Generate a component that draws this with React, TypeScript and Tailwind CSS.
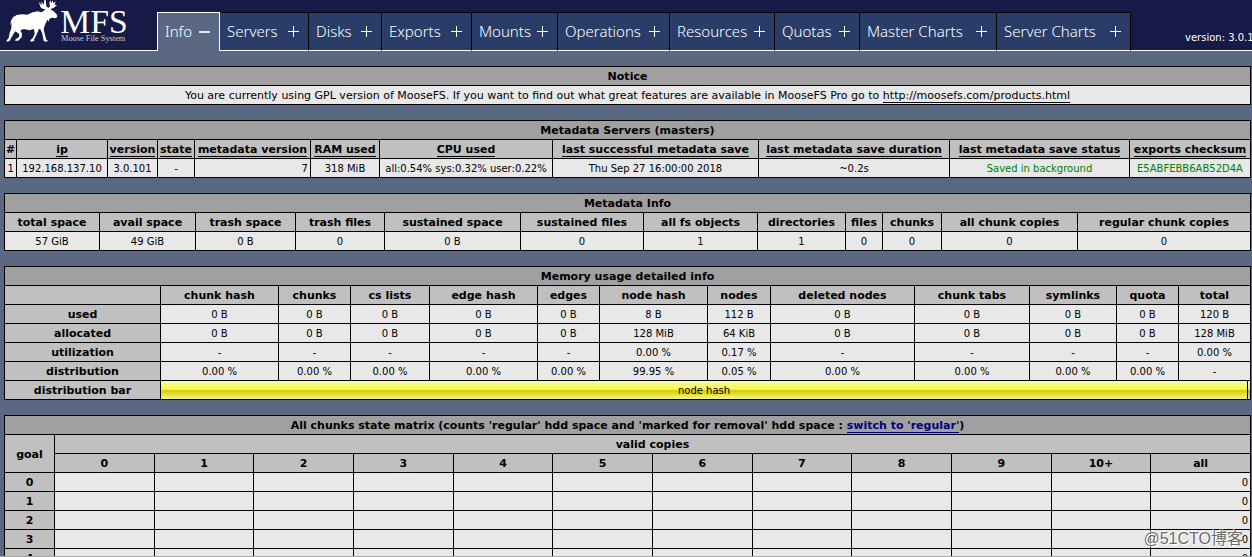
import React from "react";

type Align = "center" | "right";

const tabs = [
  { label: "Info", width: "w-[63px]", active: true },
  { label: "Servers", width: "w-[89px]" },
  { label: "Disks", width: "w-[73px]" },
  { label: "Exports", width: "w-[90px]" },
  { label: "Mounts", width: "w-[86px]" },
  { label: "Operations", width: "w-[112px]" },
  { label: "Resources", width: "w-[105px]" },
  { label: "Quotas", width: "w-[85px]" },
  { label: "Master Charts", width: "w-[137px]" },
  { label: "Server Charts", width: "w-[134px]" },
];

const frame = "h-[19px] overflow-hidden whitespace-nowrap border-r border-b border-black text-center leading-4";
const cell = `${frame} px-0 pt-0.5 pb-0`;

function Cols({ widths }: { widths: number[] }) {
  const total = widths.reduce((a, b) => a + b, 0);
  return (
    <colgroup>
      {widths.map((w, i) => (
        <col key={i} style={{ width: `${(w / total) * 100}%` }} />
      ))}
    </colgroup>
  );
}

function Panel({ children }: { children: React.ReactNode }) {
  return (
    <table className="w-full table-fixed border-separate border-spacing-0 border-t border-l border-black">{children}</table>
  );
}

function Title({ span, children }: { span: number; children: React.ReactNode }) {
  return (
    <tr>
      <th colSpan={span} className={`${cell} bg-[#a0a0a0] text-[11px]`}>
        {children}
      </th>
    </tr>
  );
}

function Head(props: React.ThHTMLAttributes<HTMLTableCellElement>) {
  return <th {...props} className={`${cell} bg-[#c0c0c0] text-[11px]`} />;
}

function Cell({ align = "center", tone = "", children }: { align?: Align; tone?: string; children?: React.ReactNode }) {
  return (
    <td className={`${cell} bg-[#e8e8e8] ${tone}`}>
      {align === "right" ? <div className="pr-0.5 text-right">{children}</div> : children}
    </td>
  );
}

function Logo() {
  return (
    <svg viewBox="0 0 471 150" className="h-[50px] w-[157px] shrink-0" role="img" aria-label="MFS Moose File System">
      <path
        fill="#fff"
        d="M117 6 L126 16 L124 3 L131 15 L133 0 L137 0 L139 19 L145 24 L150 18 L148 8 L151 1 L154 10 L158 1 L160 10 L167 4 L164 14 L171 16 L161 23 L151 28 L160 33 L170 43 L172 51 L166 55 L155 53 L148 57 L146 65 L142 59 L136 72 L131 87 L134 101 L139 119 L145 123 L136 125 L131 122 L127 101 L122 89 L117 86 L111 101 L102 119 L103 123 L92 125 L91 121 L99 113 L104 101 L102 87 L88 91 L72 87 L61 91 L66 101 L65 112 L55 122 L45 122 L47 118 L57 111 L58 103 L46 94 L39 104 L33 115 L29 123 L20 125 L20 121 L26 114 L29 99 L34 85 L35 68 L31 76 L33 62 L39 52 L50 45 L65 43 L82 44 L98 37 L113 34 L124 37 L131 33 L136 27 L129 27 L121 21 Z"
      />
      <text x="181" y="100" fill="#fff" fontFamily="Liberation Serif, serif" fontSize="101">MFS</text>
      <text x="183" y="124" fill="#c9cbdc" fontFamily="Liberation Serif, serif" fontSize="25">Moose File System</text>
    </svg>
  );
}

function Sign({ minus }: { minus?: boolean }) {
  return (
    <svg viewBox="0 0 11 11" className="size-[11px] shrink-0" shapeRendering="crispEdges" aria-hidden="true">
      {minus ? <path d="M0 4h11v2H0z" fill="#e4e6ec" /> : <path d="M0 5h11v1H0zM5 0h1v11H5z" fill="#fff" />}
    </svg>
  );
}

function Sort({ children }: { children: React.ReactNode }) {
  return (
    <a href="#" className="border-b border-black">
      {children}
    </a>
  );
}

const serverCols = ["#", "ip", "version", "state", "metadata version", "RAM used", "CPU used", "last successful metadata save", "last metadata save duration", "last metadata save status", "exports checksum"];

const info: [string, string][] = [
  ["total space", "57 GiB"],
  ["avail space", "49 GiB"],
  ["trash space", "0 B"],
  ["trash files", "0"],
  ["sustained space", "0 B"],
  ["sustained files", "0"],
  ["all fs objects", "1"],
  ["directories", "1"],
  ["files", "0"],
  ["chunks", "0"],
  ["all chunk copies", "0"],
  ["regular chunk copies", "0"],
];

const memoryCols = ["", "chunk hash", "chunks", "cs lists", "edge hash", "edges", "node hash", "nodes", "deleted nodes", "chunk tabs", "symlinks", "quota", "total"];

const memory: [string, string[]][] = [
  ["used", ["0 B", "0 B", "0 B", "0 B", "0 B", "8 B", "112 B", "0 B", "0 B", "0 B", "0 B", "120 B"]],
  ["allocated", ["0 B", "0 B", "0 B", "0 B", "0 B", "128 MiB", "64 KiB", "0 B", "0 B", "0 B", "0 B", "128 MiB"]],
  ["utilization", ["-", "-", "-", "-", "-", "0.00 %", "0.17 %", "-", "-", "-", "-", "0.00 %"]],
  ["distribution", ["0.00 %", "0.00 %", "0.00 %", "0.00 %", "0.00 %", "99.95 %", "0.05 %", "0.00 %", "0.00 %", "0.00 %", "0.00 %", "-"]],
];

const copies = ["0", "1", "2", "3", "4", "5", "6", "7", "8", "9", "10+", "all"];

export default function App() {
  return (
    <div className="relative h-screen overflow-hidden border-b border-[#a8a8a8] bg-[#5b6882] font-['DejaVu_Sans',sans-serif] text-[10px] leading-4 text-black">
      <header className="flex h-[51px] items-end border-b border-white bg-[#151a46]">
        <Logo />
        <nav className="-mb-px flex shrink-0">
          {tabs.map((t) => (
            <a
              key={t.label}
              href="#"
              className={`flex h-[39px] items-center justify-between whitespace-nowrap border-t border-r pr-[9px] pl-[7px] font-['Noto_Sans',sans-serif] text-[15px] font-light text-white ${t.width} ${
                t.active ? "border-l border-white bg-[#5b6882]" : "border-b border-t-black border-r-black border-b-white bg-[#2a3d68]"
              }`}
            >
              <span className="pb-0.5">{t.label}</span>
              <Sign minus={t.active} />
            </a>
          ))}
        </nav>
        <div className="ml-auto w-[67px] shrink-0 whitespace-nowrap pb-1 text-white">version: 3.0.101</div>
      </header>

      <main className="flex flex-col gap-[15px] pt-[15px] pr-px pl-1">
        <Panel>
          <tbody>
            <Title span={1}>Notice</Title>
            <tr>
              <Cell tone="text-[11px]">
                You are currently using GPL version of MooseFS. If you want to find out what great features are available in MooseFS Pro go to{" "}
                <a href="http://moosefs.com/products.html" className="border-b border-black">
                  http://moosefs.com/products.html
                </a>
              </Cell>
            </tr>
          </tbody>
        </Panel>

        <Panel>
          <Cols widths={[12, 91, 50, 37, 116, 69, 173, 206, 191, 180, 121]} />
          <tbody>
            <Title span={11}>Metadata Servers (masters)</Title>
            <tr>
              {serverCols.map((c) => (
                <Head key={c}>{c === "#" ? c : <Sort>{c}</Sort>}</Head>
              ))}
            </tr>
            <tr>
              <Cell align="right">1</Cell>
              <Cell>192.168.137.10</Cell>
              <Cell>3.0.101</Cell>
              <Cell>-</Cell>
              <Cell align="right">7</Cell>
              <Cell>318 MiB</Cell>
              <Cell>all:0.54% sys:0.32% user:0.22%</Cell>
              <Cell>Thu Sep 27 16:00:00 2018</Cell>
              <Cell>~0.2s</Cell>
              <Cell tone="text-[#008000]">Saved in background</Cell>
              <Cell tone="text-[#008000]">E5ABFEBB6AB52D4A</Cell>
            </tr>
          </tbody>
        </Panel>

        <Panel>
          <Cols widths={[95, 96, 100, 89, 136, 123, 114, 88, 37, 59, 136, 173]} />
          <tbody>
            <Title span={12}>Metadata Info</Title>
            <tr>
              {info.map(([k]) => (
                <Head key={k}>{k}</Head>
              ))}
            </tr>
            <tr>
              {info.map(([k, v]) => (
                <Cell key={k}>{v}</Cell>
              ))}
            </tr>
          </tbody>
        </Panel>

        <Panel>
          <Cols widths={[156, 118, 72, 79, 108, 62, 108, 63, 144, 115, 87, 62, 72]} />
          <tbody>
            <Title span={13}>Memory usage detailed info</Title>
            <tr>
              {memoryCols.map((c) => (
                <Head key={c}>{c}</Head>
              ))}
            </tr>
            {memory.map(([name, values]) => (
              <tr key={name}>
                <Head>{name}</Head>
                {values.map((v, i) => (
                  <Cell key={i}>{v}</Cell>
                ))}
              </tr>
            ))}
            <tr>
              <Head>distribution bar</Head>
              <td colSpan={12} className={`${frame} p-0`}>
                <div className="flex h-[18px]">
                  <div className="flex-1 border-r border-black bg-[linear-gradient(#fafab4_0%,#f5f53c_50%,#d6cc00_52%,#f5f58c_100%)] pt-0.5">
                    node hash
                  </div>
                  <div className="w-0.5 bg-[linear-gradient(#f0f0f0_0%,#dcdcdc_50%,#a0a0a0_52%,#dcdcdc_100%)]" />
                </div>
              </td>
            </tr>
          </tbody>
        </Panel>

        <Panel>
          <colgroup>
            <col className="w-[50px]" />
            {copies.map((c) => (
              <col key={c} />
            ))}
          </colgroup>
          <tbody>
            <Title span={13}>
              All chunks state matrix (counts 'regular' hdd space and 'marked for removal' hdd space :{" "}
              <a href="#" className="border-b border-[#000080] text-[#000080]">
                switch to 'regular'
              </a>
              )
            </Title>
            <tr>
              <Head rowSpan={2}>goal</Head>
              <Head colSpan={12}>valid copies</Head>
            </tr>
            <tr>
              {copies.map((c) => (
                <Head key={c}>{c}</Head>
              ))}
            </tr>
            {["0", "1", "2", "3", "4"].map((goal) => (
              <tr key={goal}>
                <Head>{goal}</Head>
                {copies.map((c) => (
                  <Cell key={c} align="right">
                    {c === "all" ? "0" : ""}
                  </Cell>
                ))}
              </tr>
            ))}
          </tbody>
        </Panel>
      </main>

      <div className="pointer-events-none absolute right-[9px] bottom-[7px] font-['Liberation_Sans','Noto_Sans_CJK_SC',sans-serif] text-base leading-5 text-[#6a6a6a] [text-shadow:1px_1px_1px_#fff,-1px_-1px_1px_#fff]">
        @51CTO博客
      </div>
    </div>
  );
}
